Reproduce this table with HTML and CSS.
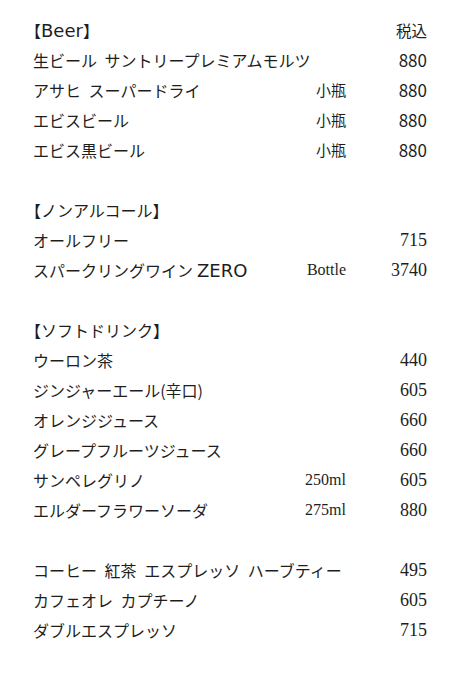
FILE: index.html
```html
<!DOCTYPE html>
<html lang="ja">
<head>
<meta charset="utf-8">
<link rel="stylesheet" href="styles.css">
</head>
<body>
<div class="menu">
  <section class="group">
    <div class="row head"><span class="name">【<span class="latin">Beer</span>】</span><span class="price tax">税込</span></div>
    <div class="row"><span class="name">生ビール サントリープレミアムモルツ</span><span class="price sans">880</span></div>
    <div class="row"><span class="name">アサヒ スーパードライ</span><span class="note sans">小瓶</span><span class="price sans">880</span></div>
    <div class="row"><span class="name">エビスビール</span><span class="note sans">小瓶</span><span class="price sans">880</span></div>
    <div class="row"><span class="name">エビス黒ビール</span><span class="note sans">小瓶</span><span class="price sans">880</span></div>
  </section>
  <section class="group">
    <div class="row head"><span class="name">【ノンアルコール】</span></div>
    <div class="row"><span class="name">オールフリー</span><span class="price">715</span></div>
    <div class="row"><span class="name">スパークリングワイン<span class="latin zero">ZERO</span></span><span class="note">Bottle</span><span class="price">3740</span></div>
  </section>
  <section class="group">
    <div class="row head"><span class="name">【ソフトドリンク】</span></div>
    <div class="row"><span class="name">ウーロン茶</span><span class="price">440</span></div>
    <div class="row"><span class="name">ジンジャーエール(辛口)</span><span class="price">605</span></div>
    <div class="row"><span class="name">オレンジジュース</span><span class="price">660</span></div>
    <div class="row"><span class="name">グレープフルーツジュース</span><span class="price">660</span></div>
    <div class="row"><span class="name">サンペレグリノ</span><span class="note">250ml</span><span class="price">605</span></div>
    <div class="row"><span class="name">エルダーフラワーソーダ</span><span class="note">275ml</span><span class="price">880</span></div>
  </section>
  <section class="group">
    <div class="row"><span class="name">コーヒー 紅茶 エスプレッソ ハーブティー</span><span class="price">495</span></div>
    <div class="row"><span class="name">カフェオレ カプチーノ</span><span class="price">605</span></div>
    <div class="row"><span class="name">ダブルエスプレッソ</span><span class="price">715</span></div>
  </section>
</div>
</body>
</html>
```

FILE: styles.css
```css
html, body {
  margin: 0;
  padding: 0;
  background: #ffffff;
}

body {
  font-family: "Noto Sans CJK JP", "Noto Sans", sans-serif;
  font-size: 16px;
  color: #1e1e1e;
}

.menu {
  width: 473px;
  box-sizing: border-box;
  padding: 15px 46px 0 33px;
  display: flex;
  flex-direction: column;
  gap: 30px;
}

.group {
  display: flex;
  flex-direction: column;
}

.row {
  display: flex;
  align-items: center;
  height: 30px;
  line-height: 30px;
}

.name {
  flex: 1;
  min-width: 0;
  white-space: nowrap;
  word-spacing: 4px;
}

.head .name {
  font-feature-settings: "halt";
}

.latin {
  font-family: "DejaVu Sans", sans-serif;
  font-size: 18px;
  font-feature-settings: normal;
}

.zero {
  margin-left: 4px;
}

.note {
  font-family: "Liberation Serif", serif;
  font-size: 16px;
  text-align: right;
  white-space: nowrap;
}

.note.sans {
  font-family: "Noto Sans CJK JP", sans-serif;
  font-size: 15px;
}

.price {
  width: 81px;
  flex: none;
  text-align: right;
  font-family: "Liberation Serif", serif;
  font-size: 18px;
}

.price.sans {
  font-family: "Noto Sans CJK JP", sans-serif;
  font-size: 17px;
}

.price.tax {
  font-family: "Noto Sans CJK JP", sans-serif;
  font-size: 15.5px;
}
```
